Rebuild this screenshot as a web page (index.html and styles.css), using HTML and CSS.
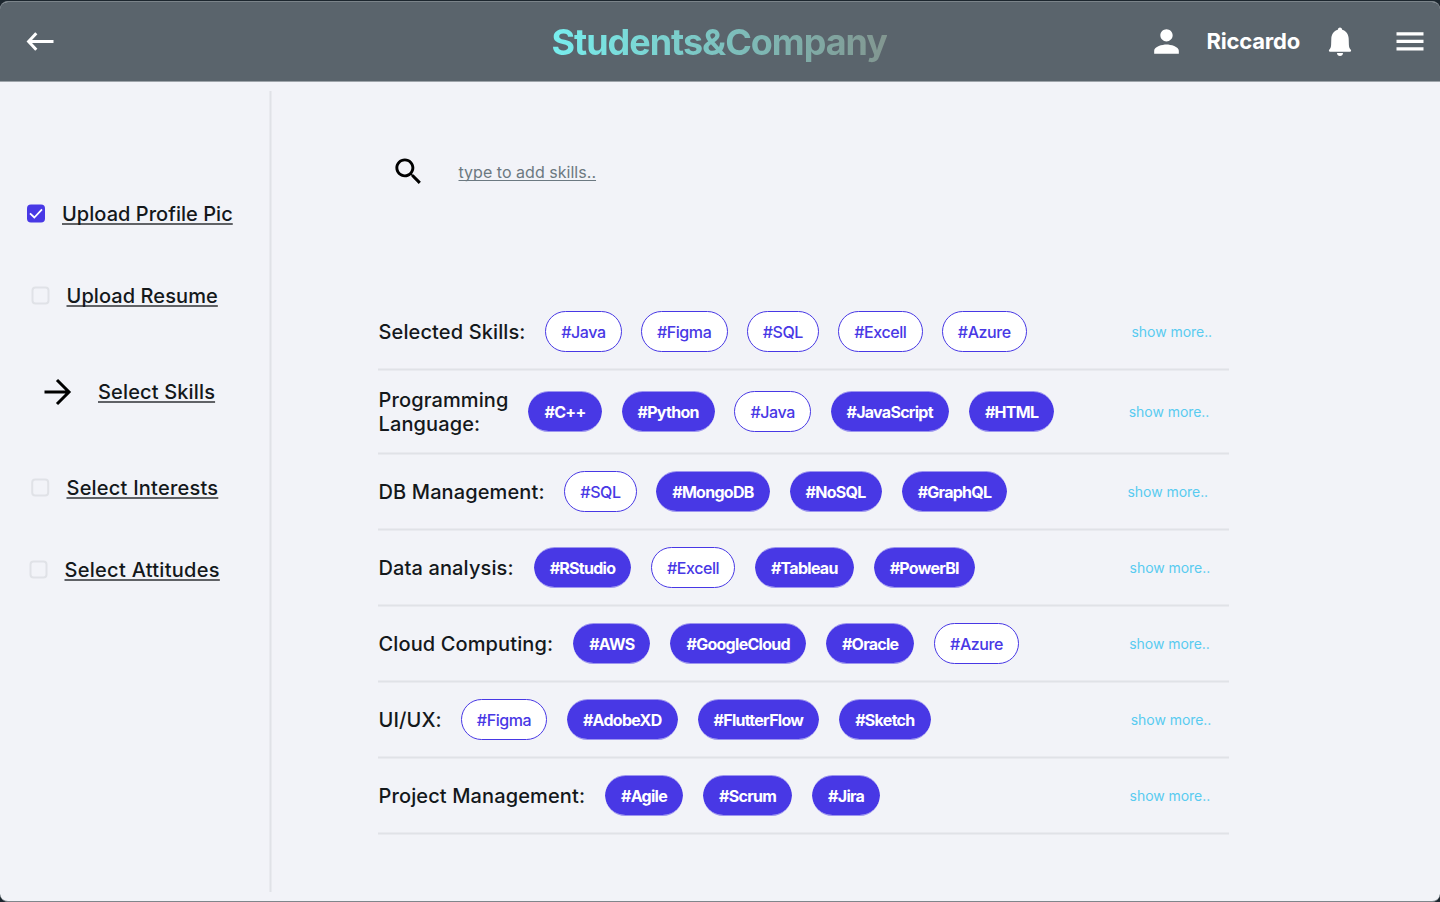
FILE: index.html
```html
<!DOCTYPE html>
<html lang="en">
<head>
<meta charset="utf-8">
<title>Students&amp;Company</title>
<link rel="stylesheet" href="styles.css">
</head>
<body>
<div class="window">
  <header class="topbar">
    <svg class="back" width="28" height="20" viewBox="0 0 28 20"><path d="M10.3 2.200L2.600 10.500l7.700 8.300M2.800 10.500h24.700" fill="none" stroke="#fff" stroke-width="3"/></svg>
    <h1 class="brand">Students&amp;Company</h1>
    <div class="account">
      <svg class="person" width="37" height="37" viewBox="0 0 24 24"><path fill="#fff" d="M12 12c2.21 0 4-1.79 4-4s-1.79-4-4-4-4 1.79-4 4 1.79 4 4 4zm0 2c-2.67 0-8 1.34-8 4v2h16v-2c0-2.66-5.33-4-8-4z"/></svg>
      <span class="name">Riccardo</span>
      <svg class="bell" width="24" height="30" viewBox="0 0 24 30"><path fill="#fff" d="M12 .5c1.100 0 1.900.8 2.200 2.200 4.100 1.300 6.300 4.500 6.500 9l.2 6.300c.1 2.400.7 3.500 1.900 4.700.6.600.3 2.100-.8 2.100H2c-1.100 0-1.400-1.500-.8-2.100 1.200-1.200 1.800-2.300 1.900-4.700l.2-6.300c.2-4.500 2.400-7.700 6.500-9C10.100 1.300 10.900.5 12 .5zM9 26h6c0 1.900-1.300 3-3 3s-3-1.100-3-3z"/></svg>
      <svg class="menu" width="28" height="20" viewBox="0 0 28 20"><path fill="#fff" d="M.5 1.300h27v3.200H.5zM.5 8.800h27v3.200H.5zM.5 16.300h27v3.200H.5z"/></svg>
    </div>
  </header>
  <div class="body">
    <nav class="steps">
      <a class="step s1"><svg class="check" width="18" height="19" viewBox="0 0 18 19"><rect y=".5" width="18" height="18" rx="4" fill="#4838e5"/><path d="M3 9.300l4.300 4.200L15 5.300" fill="none" stroke="#fff" stroke-width="1.800"/></svg><span>Upload Profile Pic</span></a>
      <a class="step s2"><svg class="box" width="19" height="19" viewBox="0 0 19 19"><rect x="1.500" y="1.500" width="16" height="16" rx="3"/></svg><span>Upload Resume</span></a>
      <a class="step s3"><svg width="28" height="28" viewBox="0 0 28 28"><path d="M13 2l12 12-12 12M0.500 14h25" fill="none" stroke="#000" stroke-width="3"/></svg><span>Select Skills</span></a>
      <a class="step s4"><svg class="box" width="19" height="19" viewBox="0 0 19 19"><rect x="1.200" y="1.500" width="16" height="16" rx="3"/></svg><span>Select Interests</span></a>
      <a class="step s5"><svg class="box" width="19" height="19" viewBox="0 0 19 19"><rect x="1.500" y="1.500" width="16" height="16" rx="3"/></svg><span>Select Attitudes</span></a>
    </nav>
    <div class="divider"></div>
    <main class="content">
      <div class="search">
        <svg width="35" height="35" viewBox="0 0 24 24"><path d="M15.5 14h-.79l-.28-.27C15.41 12.59 16 11.11 16 9.500 16 5.910 13.090 3 9.500 3S3 5.910 3 9.500 5.910 16 9.500 16c1.610 0 3.090-.59 4.230-1.570l.27.28v.79l5 4.990L20.490 19l-4.990-5zm-6 0C7.010 14 5 11.990 5 9.500S7.010 5 9.500 5 14 7.010 14 9.500 11.990 14 9.500 14z"/></svg>
        <span class="hint">type to add skills..</span>
      </div>
      <section class="skills">
        <div class="row r1"><h2>Selected Skills:</h2><b class="chip off">#Java</b><b class="chip off">#Figma</b><b class="chip off">#SQL</b><b class="chip off">#Excell</b><b class="chip off">#Azure</b><a class="more">show more..</a></div>
        <div class="row r2"><h2>Programming<br>Language:</h2><b class="chip">#C++</b><b class="chip">#Python</b><b class="chip off">#Java</b><b class="chip">#JavaScript</b><b class="chip">#HTML</b><a class="more">show more..</a></div>
        <div class="row r3"><h2>DB Management:</h2><b class="chip off">#SQL</b><b class="chip">#MongoDB</b><b class="chip">#NoSQL</b><b class="chip">#GraphQL</b><a class="more">show more..</a></div>
        <div class="row r4"><h2>Data analysis:</h2><b class="chip">#RStudio</b><b class="chip off">#Excell</b><b class="chip">#Tableau</b><b class="chip">#PowerBI</b><a class="more">show more..</a></div>
        <div class="row r5"><h2>Cloud Computing:</h2><b class="chip">#AWS</b><b class="chip">#GoogleCloud</b><b class="chip">#Oracle</b><b class="chip off">#Azure</b><a class="more">show more..</a></div>
        <div class="row r6"><h2>UI/UX:</h2><b class="chip off">#Figma</b><b class="chip">#AdobeXD</b><b class="chip">#FlutterFlow</b><b class="chip">#Sketch</b><a class="more">show more..</a></div>
        <div class="row r7"><h2>Project Management:</h2><b class="chip">#Agile</b><b class="chip">#Scrum</b><b class="chip">#Jira</b><a class="more">show more..</a></div>
      </section>
    </main>
  </div>
</div>
</body>
</html>
```
FILE: styles.css
```css
* { box-sizing: border-box; }
body {
  margin: 0;
  height: 902px;
  overflow: hidden;
  background: #1c262e;
  font-family: Inter, "Liberation Sans", sans-serif;
  color: #14181b;
}
svg { display: block; flex: none; }
.window {
  height: 901px;
  margin-top: 1px;
  border-radius: 8px;
  overflow: hidden;
  background: #f2f3f8;
  border-top: 1px solid #7b848a;
  border-bottom: 1px solid #7f868b;
}
.topbar {
  height: 80px;
  display: grid;
  grid-template-columns: 1fr auto 1fr;
  align-items: center;
  padding: 0 16px;
  background: #5a646c;
  border-bottom: 1px solid #9ea4aa;
}
.back { margin: 0 0 1px 10px; }
.brand {
  margin: 0 1.500px 0 0;
  font-size: 36px;
  line-height: 44px;
  font-weight: 700;
  letter-spacing: -1.03px;
  background: linear-gradient(90deg, #78eeee, #829690);
  -webkit-background-clip: text;
  background-clip: text;
  color: transparent;
}
.account {
  display: flex;
  align-items: center;
  justify-content: flex-end;
  color: #fff;
}
.name {
  margin: 0 28px 2px 21.500px;
  font-size: 22px;
  font-weight: 700;
  letter-spacing: -0.2px;
}
.menu { margin: 0 0 1px 44px; }
.body { display: flex; height: 819px; }
.steps {
  width: 269px;
  flex: none;
  padding-top: 120px;
}
.step {
  display: flex;
  align-items: center;
  height: 24px;
  font-size: 20px;
  line-height: 24px;
  font-weight: 500;
  white-space: nowrap;
}
.step span {
  text-decoration: underline 2px #606266;
  text-decoration-skip-ink: none;
  text-underline-offset: 2px;
}
.box {
  margin-bottom: 1px;
  fill: none;
  stroke: #e0e2e7;
  stroke-width: 2px;
}
.check { margin-bottom: 1px; }
.s1 { padding-left: 27px; gap: 17px; letter-spacing: 0.04px; }
.s2 { padding-left: 31px; gap: 16.500px; margin-top: 58px; letter-spacing: 0.08px; }
.s3 { padding-left: 44px; gap: 26px; margin-top: 72px; letter-spacing: 0.15px; }
.s4 { padding-left: 31px; gap: 16.500px; margin-top: 72px; letter-spacing: 0.22px; }
.s5 { padding-left: 29px; gap: 16.500px; margin-top: 58px; letter-spacing: 0.29px; }
.divider {
  width: 3px;
  height: 801px;
  margin-top: 9px;
  flex: none;
  background: linear-gradient(90deg, #e9eaef 1px, #e0e2e7 1px 2px, #e9eaef 2px);
}
.content { padding: 71px 0 0 106px; }
.search {
  display: flex;
  align-items: center;
  gap: 33px;
  height: 36px;
  padding-left: 12.500px;
}
.hint {
  padding-top: 2px;
  font-size: 16px;
  letter-spacing: 0.03px;
  color: #6c7981;
  text-decoration: underline;
  text-decoration-skip-ink: none;
  text-underline-offset: 2px;
}
.skills { width: 851px; margin-top: 106px; }
.row {
  display: flex;
  align-items: center;
  height: 76px;
  padding-bottom: 3px;
  background: linear-gradient(#e9eaef 1px, #e0e2e7 1px 2px, #e9eaef 2px) bottom / 100% 3px no-repeat;
}
.r2 { height: 84px; }
.row h2 {
  margin: 0 0 0 0.5px;
  font-size: 20px;
  line-height: 24px;
  font-weight: 500;
  letter-spacing: 0.12px;
  white-space: nowrap;
}
.r6 h2 { margin-right: -0.600px; }
.chip {
  height: 41px;
  margin-left: 20px;
  padding: 0 16px;
  border: solid rgba(72, 56, 229, 0.5);
  border-width: 1px 0;
  border-radius: 20.5px;
  background: #4838e5;
  background-clip: padding-box;
  color: #fff;
  font-size: 16px;
  line-height: 40px;
  font-weight: 700;
  letter-spacing: -0.72px;
}
.chip.off {
  margin: 0 -0.5px 0 19.5px;
  padding: 1px 15.200px 0;
  border: 1px solid #4838e5;
  background: #fff;
  color: #4838e5;
  line-height: 39px;
  font-weight: 500;
  letter-spacing: -0.42px;
}
.more {
  margin-left: auto;
  margin-right: 18.800px;
  font-size: 14px;
  letter-spacing: -0.05px;
  color: #59cbf0;
}
.r1 .more { margin-right: 16.900px; }
.r2 .more { margin-right: 19.700px; }
.r3 .more { margin-right: 20.900px; }
.r5 .more { margin-right: 19.200px; }
.r6 .more { margin-right: 17.700px; }
```
